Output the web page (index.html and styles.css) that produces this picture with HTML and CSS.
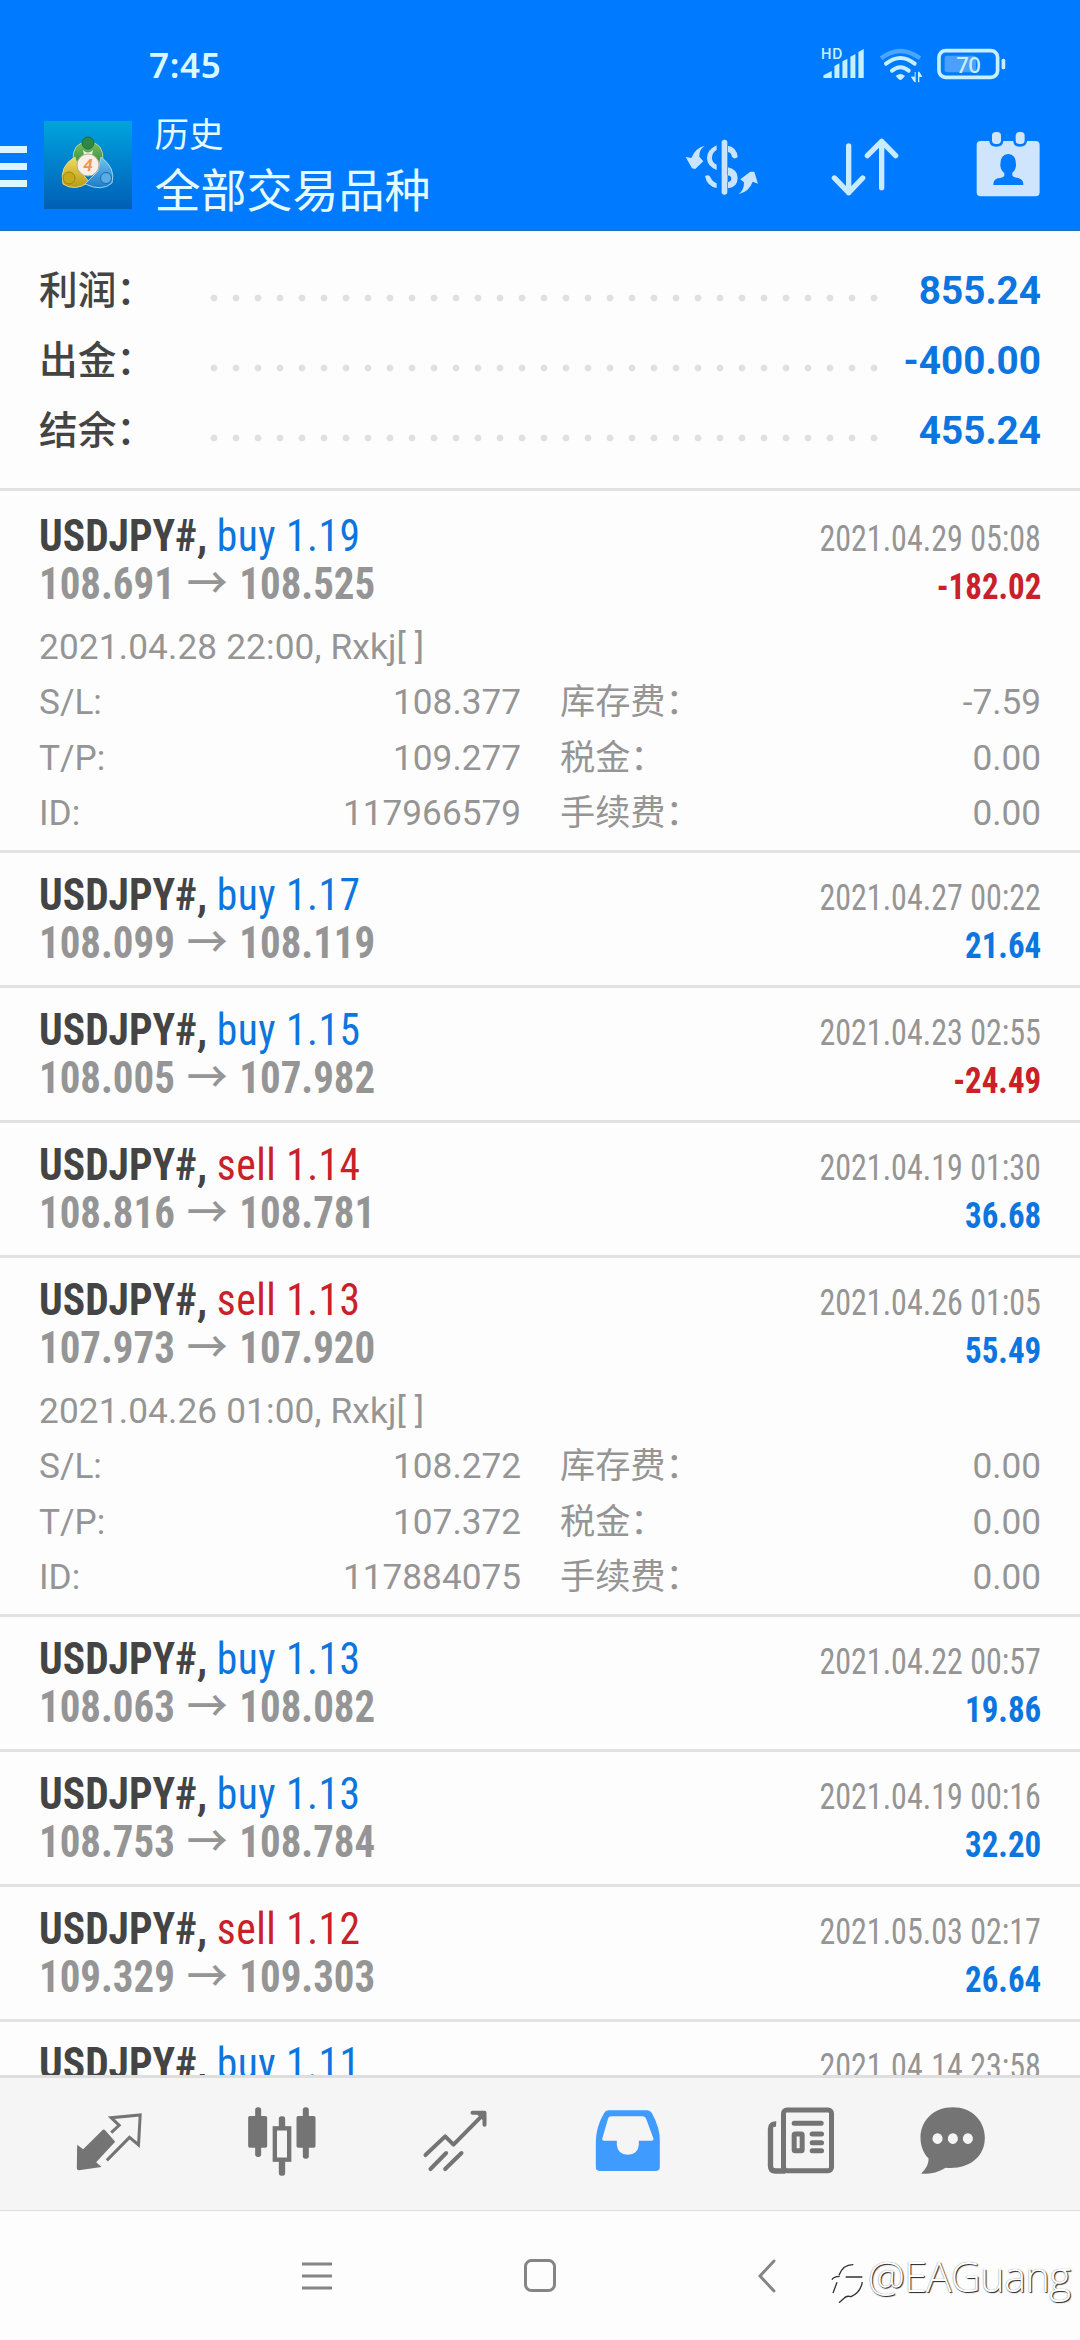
FILE: index.html
```html
<!DOCTYPE html>
<html lang="zh-CN">
<head>
<meta charset="utf-8">
<title>历史</title>
<link rel="stylesheet" href="styles.css">
</head>
<body>
<header class="header">
  <div class="status">
    <span class="time">7:45</span>
    <svg class="status-icons" viewBox="545 78 557 112" fill="#c6efff">
      <text x="545" y="117" class="hd">HD</text>
      <path d="M552 174v-8l25-13v21zM585 174v-36l15-8v44zM609 174v-50l15-8v58zM633 174v-64l15-8v72zM657 174V96l16-9v87z"/>
      <path d="M725 115q58-44 117 0" fill="none" stroke="#4ba6ff" stroke-width="13"/>
      <path d="M740 131q43-34 86 0M758 152q25-20 50 0" fill="none" stroke="#c6efff" stroke-width="12" stroke-linecap="round"/>
      <path d="M769 168q14-12 28 0l-9 10q-5 4-10 0zM815 170h11v-14h3v31h-3zM849 170h-9v17h-4v-32h4z"/>
      <path d="M825 186l-10-16h10zM838 156l10 14h-10z"/>
      <rect x="916" y="107" width="94" height="50" rx="6" fill="#4b9fff"/>
      <rect x="899" y="92" width="176" height="80" rx="20" fill="none" stroke="#c6efff" stroke-width="11"/>
      <rect x="1087" y="116" width="11" height="32" rx="5"/>
      <text x="951" y="158" class="pct">70</text>
    </svg>
  </div>
  <div class="toolbar">
    <div class="burger"><i></i><i></i><i></i></div>
    <svg class="logo" viewBox="0 0 88 88">
      <defs>
        <linearGradient id="bg" x2="0" y2="1"><stop offset="0" stop-color="#00a4dd"/><stop offset=".5" stop-color="#0080cb"/><stop offset="1" stop-color="#005fb4"/></linearGradient>
        <linearGradient id="gr" x2="0" y2="1"><stop offset="0" stop-color="#7cc05c"/><stop offset="1" stop-color="#26803a"/></linearGradient>
        <linearGradient id="ye" x2="0" y2="1"><stop offset="0" stop-color="#f0dc59"/><stop offset="1" stop-color="#b79a18"/></linearGradient>
        <linearGradient id="bl" x2="0" y2="1"><stop offset="0" stop-color="#6fc2f0"/><stop offset="1" stop-color="#1c7cc9"/></linearGradient>
      </defs>
      <rect width="88" height="88" fill="url(#bg)"/>
      <path d="M29 40q-1-19 15-19t15 19v8H29z" fill="url(#gr)" stroke="#a9d79b"/>
      <circle cx="44" cy="22" r="6" fill="#2f8740" stroke="#1d6f45"/>
      <path d="M39 29q5 5 10 0l-1 5h-8z" fill="#e6f5df"/>
      <path d="M31 36q-16 9-12 27 12 8 26-2L34 47z" fill="url(#ye)" stroke="#e9d978"/>
      <circle cx="25" cy="57" r="6" fill="#c9a91c" stroke="#9c8514"/>
      <path d="M57 36q15 11 11 26-10 9-27 1l13-13z" fill="url(#bl)" stroke="#9fd4f2"/>
      <circle cx="62" cy="57" r="5.500" fill="#58aee4" stroke="#1b6bb4"/>
      <circle cx="44" cy="44" r="11" fill="#f7f0e8" stroke="#b8a99a"/>
      <text x="44" y="50" class="four">4</text>
    </svg>
    <div class="titles"><div class="title-small">历史</div><div class="title-big">全部交易品种</div></div>
    <div class="actions">
      <svg class="act-dollar" viewBox="136 346 220 168" fill="#c8e4ff">
        <rect x="246" y="348" width="17" height="165" rx="8"/>
        <path d="M231 365v14q-14 8-14 23t14 21v16q-29-12-29-36t29-38zM265 366q26 4 29 34-10 9-17-1-3-13-12-14zM196 457q11-6 16 3 6 14 19 19v14q-29-5-35-36z"/>
        <path fill-rule="evenodd" d="M265 431q29 6 29 33t-29 30zM264 455v20q11-1 11-10t-11-10z"/>
        <path d="M196 366q-18 10-17 33l12 14-24 23-10-2-19-34 17 3q12-31 41-37zM297 512q17-14 16-36l-11-9 30-23h12l11 36-16-6q-9 28-42 38z"/>
      </svg>
      <svg class="act-sort" viewBox="573 344 204 178" fill="none" stroke="#c8ecff" stroke-width="16" stroke-linecap="round" stroke-linejoin="round">
        <path d="M626 371v140M583 467l43 44 42-44M725 496V357M682 400l43-43 42 43"/>
      </svg>
      <svg class="act-cal" viewBox="1007 333 193 198" fill="#cfe4fd">
        <path fill-rule="evenodd" d="M1021 363h26q0 17 21 17t21-17h30q0 17 20 17t21-17h26q12 0 12 12v142q0 12-12 12h-165q-12 0-12-12V375q0-12 12-12zM1104 402q-25 1-24 35 2 15 12 22v8q-1 5-20 8-13 4-13 20h90q1-15-13-20-20-4-20-10v-7q9-6 11-21 1-34-23-35z"/>
        <rect x="1055" y="336" width="27" height="36" rx="11"/><rect x="1126" y="336" width="27" height="36" rx="11"/>
      </svg>
    </div>
  </div>
</header>

<section class="summary">
  <div class="sum-row"><span class="sum-label">利润：</span><span class="dots"></span><b>855.24</b></div>
  <div class="sum-row"><span class="sum-label">出金：</span><span class="dots"></span><b>-400.00</b></div>
  <div class="sum-row"><span class="sum-label">结余：</span><span class="dots"></span><b>455.24</b></div>
</section>

<main class="list">
  <article class="deal">
    <div class="line"><span class="sym">USDJPY#, <span class="buy">buy 1.19</span></span><time>2021.04.29 05:08</time></div>
    <div class="line"><span class="price">108.691 <span class="arrow">→</span> 108.525</span><span class="profit neg">-182.02</span></div>
    <div class="details">
      <div class="comment">2021.04.28 22:00, Rxkj[ ]</div>
      <div class="pair"><span>S/L:</span><span>108.377</span></div><div class="pair"><span>库存费：</span><span>-7.59</span></div>
      <div class="pair"><span>T/P:</span><span>109.277</span></div><div class="pair"><span>税金：</span><span>0.00</span></div>
      <div class="pair"><span>ID:</span><span>117966579</span></div><div class="pair"><span>手续费：</span><span>0.00</span></div>
    </div>
  </article>
  <article class="deal">
    <div class="line"><span class="sym">USDJPY#, <span class="buy">buy 1.17</span></span><time>2021.04.27 00:22</time></div>
    <div class="line"><span class="price">108.099 <span class="arrow">→</span> 108.119</span><span class="profit">21.64</span></div>
  </article>
  <article class="deal">
    <div class="line"><span class="sym">USDJPY#, <span class="buy">buy 1.15</span></span><time>2021.04.23 02:55</time></div>
    <div class="line"><span class="price">108.005 <span class="arrow">→</span> 107.982</span><span class="profit neg">-24.49</span></div>
  </article>
  <article class="deal">
    <div class="line"><span class="sym">USDJPY#, <span class="sell">sell 1.14</span></span><time>2021.04.19 01:30</time></div>
    <div class="line"><span class="price">108.816 <span class="arrow">→</span> 108.781</span><span class="profit">36.68</span></div>
  </article>
  <article class="deal">
    <div class="line"><span class="sym">USDJPY#, <span class="sell">sell 1.13</span></span><time>2021.04.26 01:05</time></div>
    <div class="line"><span class="price">107.973 <span class="arrow">→</span> 107.920</span><span class="profit">55.49</span></div>
    <div class="details">
      <div class="comment">2021.04.26 01:00, Rxkj[ ]</div>
      <div class="pair"><span>S/L:</span><span>108.272</span></div><div class="pair"><span>库存费：</span><span>0.00</span></div>
      <div class="pair"><span>T/P:</span><span>107.372</span></div><div class="pair"><span>税金：</span><span>0.00</span></div>
      <div class="pair"><span>ID:</span><span>117884075</span></div><div class="pair"><span>手续费：</span><span>0.00</span></div>
    </div>
  </article>
  <article class="deal">
    <div class="line"><span class="sym">USDJPY#, <span class="buy">buy 1.13</span></span><time>2021.04.22 00:57</time></div>
    <div class="line"><span class="price">108.063 <span class="arrow">→</span> 108.082</span><span class="profit">19.86</span></div>
  </article>
  <article class="deal">
    <div class="line"><span class="sym">USDJPY#, <span class="buy">buy 1.13</span></span><time>2021.04.19 00:16</time></div>
    <div class="line"><span class="price">108.753 <span class="arrow">→</span> 108.784</span><span class="profit">32.20</span></div>
  </article>
  <article class="deal">
    <div class="line"><span class="sym">USDJPY#, <span class="sell">sell 1.12</span></span><time>2021.05.03 02:17</time></div>
    <div class="line"><span class="price">109.329 <span class="arrow">→</span> 109.303</span><span class="profit">26.64</span></div>
  </article>
  <article class="deal">
    <div class="line"><span class="sym">USDJPY#, <span class="buy">buy 1.11</span></span><time>2021.04.14 23:58</time></div>
  </article>
</main>

<nav class="tabs">
  <svg viewBox="213 322 203 206" fill="#747474">
    <path d="M219 435l18 14 59-59q4-1 7 2l30 34-57 62 16 14-68 10q-6 0-6-6z"/>
    <path d="M308 482l68-69 27 23 5-90-87 8 24 23-24 22" fill="none" stroke="#747474" stroke-width="9" stroke-linejoin="miter"/>
  </svg>
  <svg viewBox="715 322 203 206" fill="#747474">
    <rect x="736" y="323" width="18" height="149" rx="8"/><rect x="715" y="349" width="57" height="95" rx="5"/>
    <rect x="879" y="323" width="18" height="154" rx="8"/><rect x="860" y="349" width="57" height="95" rx="5"/>
    <rect x="807" y="350" width="19" height="178" rx="8"/><rect x="795" y="386" width="43" height="94" fill="#f5f5f5" stroke="#747474" stroke-width="13"/>
  </svg>
  <svg viewBox="1217 322 203 206" fill="none" stroke="#747474" stroke-width="12" stroke-linecap="round" stroke-linejoin="round">
    <path d="M1230 466l59-56 25 25 92-93M1371 339h36v36M1245 508l47-48M1289 508l49-48"/><path d="M1390 341h15v15z"/>
  </svg>
  <svg viewBox="153 322 203 206" fill="#3f9bfe">
    <path fill-rule="evenodd" d="M196 332h116q9 0 14 8 25 45 24 85v76q0 13-13 13H171q-13 0-13-13v-76q1-45 25-85 4-8 13-8zM204 350q-7 0-9 6l-18 62q0 5 6 5h38v12q2 29 33 30 31-1 33-30v-12h38q7 0 6-6l-21-57q-4-10-13-10z"/>
  </svg>
  <svg viewBox="657 322 203 206" fill="none" stroke="#747474" stroke-width="15">
    <rect x="706" y="331" width="144" height="182" rx="10"/><path d="M684 373q-17-1-17 14v112q0 15 15 15h30" stroke-width="16"/>
    <path d="M738 371h81M792 403h28M792 429h28M792 453h28" stroke-linecap="round"/><rect x="738" y="403" width="24" height="50" rx="3"/>
  </svg>
  <svg viewBox="1098 322 203 206" fill="#747474">
    <path fill-rule="evenodd" d="M1199 323c56 0 96 40 96 91 0 58-48 96-118 90-22 14-44 19-73 18 16-16 23-30 22-46-15-15-24-38-24-62 0-51 40-91 97-91zM1153 401a15 16 0 1 0 .1 0zM1199 401a15 16 0 1 0 .1 0zM1244 401a15 16 0 1 0 .1 0z"/>
  </svg>
</nav>

<footer class="sysnav">
  <svg class="sys-menu" viewBox="0 0 30 30"><path d="M0 3h30M0 15h30M0 27h30"/></svg>
  <svg class="sys-home" viewBox="0 0 32 34"><rect x="1.500" y="1.500" width="29" height="30" rx="6"/></svg>
  <svg class="sys-back" viewBox="0 0 18 34"><path d="M16 2L2 17l14 15"/></svg>
  <div class="watermark">
    <svg viewBox="34 68 98 122"><path d="M58 105q12-33 43-32M37 118q3-9 23-10M40 158l12-32M78 110h50M128 125q-6 32-34 44-14-4-20 4l-16 14"/></svg>
    <span>@EAGuang</span>
  </div>
</footer>
</body>
</html>
```
FILE: styles.css
```css
* { box-sizing: border-box; }
body {
  margin: 0; width: 1080px; height: 2340px; overflow: hidden; position: relative;
  display: flex; flex-direction: column; background: #fdfdfd;
  font-family: Roboto, "Noto Sans CJK SC", sans-serif; color: #959595;
}
svg { display: block; flex: none; }

.header { height: 231px; flex: none; background: #007aff; border-bottom: 1px solid #1c6fc4; color: #e4fbff; }
.status { height: 103px; padding: 0 73px 0 149px; display: flex; justify-content: space-between; align-items: flex-start; }
.time { font: 600 35px/50px "Noto Sans", sans-serif; letter-spacing: .7px; margin-top: 40px; color: #d9f8ff; }
.status-icons { width: 185.700px; height: 37.300px; margin-top: 46px; }
.hd { font: 600 42px Inter, sans-serif; letter-spacing: 2px; }
.pct { font: 500 66px "Noto Sans", sans-serif; letter-spacing: -2px; }
.toolbar { height: 127px; padding-right: 40px; display: flex; align-items: center; }
.burger { width: 27px; height: 41px; margin-right: 17px; display: flex; flex-direction: column; justify-content: space-between; }
.burger i { height: 7px; background: #dcf6ff; }
.logo { width: 88px; height: 88px; margin-top: -4px; }
.four { font: italic 700 17px Roboto, sans-serif; fill: #ed9851; text-anchor: middle; }
.titles { margin: -8px 0 0 22.500px; font-family: "Noto Sans CJK SC", sans-serif; }
.title-small { font-size: 34.500px; line-height: 48px; }
.title-big { font-size: 46px; line-height: 62px; }
.actions { margin-left: auto; display: flex; align-items: center; }
.act-dollar { width: 73.300px; height: 56px; margin-right: 72px; }
.act-sort { width: 68px; height: 59.300px; margin-right: 77px; }
.act-cal { width: 64.300px; height: 66px; margin-top: -5px; }

.summary { flex: none; height: 260px; padding: 24.500px 39px 0; border-bottom: 3px solid #e2e2e2; margin-bottom: 3px; }
.sum-row { height: 70px; display: flex; line-height: 70px; font-size: 38.700px; }
.sum-label { width: 163.500px; color: #444; font-weight: 500; font-family: "Noto Sans CJK SC", sans-serif; line-height: 63px; }
.dots { width: 682px; background: radial-gradient(circle at 11px 42px, #e0e0e0 3px, transparent 3.800px) 0 0 / 22px 70px repeat-x; }
.sum-row b { margin-left: auto; color: #0c75df; font-weight: 700; }

.list { height: 1581px; flex: none; overflow: hidden; }
.deal { padding: 19px 39px 17px; border-bottom: 3px solid #e2e2e2; background: #fdfdfd; }
.deal:has(.details) { padding-bottom: 8.500px; }
.line { height: 48px; display: flex; justify-content: space-between; align-items: baseline; line-height: 48px; font-family: "Roboto Condensed", "Noto Sans CJK SC", sans-serif; }
.sym, .price { font-size: 43.500px; font-weight: 700; transform-origin: 0 50%; }
.sym { color: #444; transform: scaleX(.955); }
.price { transform: scaleX(.94); }
.buy, .sell { font-weight: 400; color: #0c75df; letter-spacing: .5px; }
.sell { color: #c9202a; }
.arrow { font-family: "Noto Sans CJK SC", sans-serif; font-weight: 500; line-height: 0; margin: 0 2.500px; }
.line time { font-size: 36px; font-weight: 400; transform: scaleX(.89); transform-origin: 100% 50%; }
.profit { font-size: 36px; font-weight: 700; color: #0c75df; transform: scaleX(.915); transform-origin: 100% 50%; }
.profit.neg { color: #c9202a; }
.details { margin-top: 10px; display: grid; grid-template-columns: 482px 481px; column-gap: 39px; line-height: 55.500px; font-size: 35.200px; }
.comment { grid-column: 1 / -1; line-height: 56px; letter-spacing: .150px; }
.pair { display: flex; justify-content: space-between; }

.tabs { flex: none; height: 136px; padding-left: 22px; background: #f5f5f5; border-top: 3px solid #dedede; border-bottom: 1px solid #ddd; display: grid; grid-template-columns: repeat(5, 173px) 132px; align-items: center; justify-items: center; }
.tabs svg { width: 70px; height: 68.700px; margin-top: -5px; }

.sysnav { flex: 1; position: relative; display: flex; align-items: center; padding-left: 302px; }
.sysnav svg { fill: none; stroke: #858585; stroke-width: 3; stroke-linecap: round; }
.sys-menu { width: 30px; height: 30px; margin-right: 192px; }
.sys-home { width: 32px; height: 34px; margin-right: 202px; }
.sys-back { width: 18px; height: 34px; }
.watermark { position: absolute; left: 831px; top: 39px; height: 52px; display: flex; align-items: center; font: 300 42px/52px "Open Sans", sans-serif; letter-spacing: -.900px; color: #fff; text-shadow: 1px 1px 1px #222, 0 0 1px #777; white-space: nowrap; }
.sysnav .watermark svg { width: 32.700px; height: 40.700px; margin: 14px 4px 0 0; stroke: #333; stroke-width: 4; stroke-linecap: butt; }
```
